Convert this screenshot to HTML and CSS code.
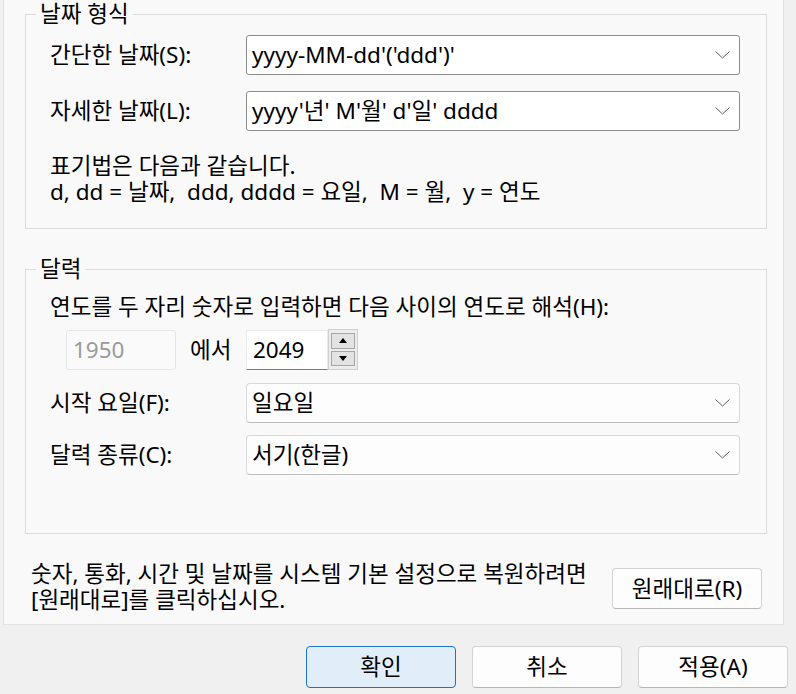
FILE: index.html
```html
<!DOCTYPE html>
<html lang="ko">
<head>
<meta charset="utf-8">
<title>날짜 형식</title>
<link rel="stylesheet" href="styles.css">
</head>
<body>
<div class="panel">
  <fieldset class="group g1">
    <legend>날짜 형식</legend>
    <div class="inner">
      <div class="row">
        <span class="label">간단한 날짜(S):</span>
        <div class="combo edit"><span class="val">yyyy-MM-dd'('ddd')'</span><svg class="chev" width="15" height="8" viewBox="0 0 15 8"><polyline points="0.5,0.5 7.5,7 14.5,0.5" fill="none" stroke="#5f5f5f" stroke-width="1"/></svg></div>
      </div>
      <div class="row">
        <span class="label">자세한 날짜(L):</span>
        <div class="combo edit"><span class="val">yyyy'년' M'월' d'일' dddd</span><svg class="chev" width="15" height="8" viewBox="0 0 15 8"><polyline points="0.5,0.5 7.5,7 14.5,0.5" fill="none" stroke="#5f5f5f" stroke-width="1"/></svg></div>
      </div>
      <p class="note">표기법은 다음과 같습니다.<br>d, dd = 날짜,&nbsp; ddd, dddd = 요일,&nbsp; M = 월,&nbsp; y = 연도</p>
    </div>
  </fieldset>

  <fieldset class="group g2">
    <legend>달력</legend>
    <div class="inner">
      <p class="line">연도를 두 자리 숫자로 입력하면 다음 사이의 연도로 해석(H):</p>
      <div class="row yearrow">
        <div class="range">
          <div class="yearbox">1950</div>
          <span class="from">에서</span>
        </div>
        <div class="spin">
          <div class="spin-text">2049</div>
          <div class="spin-btns">
            <div class="sb"><span class="tri up"></span></div>
            <div class="sb"><span class="tri down"></span></div>
          </div>
        </div>
      </div>
      <div class="row r3">
        <span class="label">시작 요일(F):</span>
        <div class="combo list"><span class="val">일요일</span><svg class="chev" width="15" height="8" viewBox="0 0 15 8"><polyline points="0.5,0.5 7.5,7 14.5,0.5" fill="none" stroke="#5f5f5f" stroke-width="1"/></svg></div>
      </div>
      <div class="row r4">
        <span class="label">달력 종류(C):</span>
        <div class="combo list"><span class="val">서기(한글)</span><svg class="chev" width="15" height="8" viewBox="0 0 15 8"><polyline points="0.5,0.5 7.5,7 14.5,0.5" fill="none" stroke="#5f5f5f" stroke-width="1"/></svg></div>
      </div>
    </div>
  </fieldset>

  <div class="restore">
    <p>숫자, 통화, 시간 및 날짜를 시스템 기본 설정으로 복원하려면<br>[원래대로]를 클릭하십시오.</p>
    <button class="btn reset">원래대로(R)</button>
  </div>
</div>

<div class="footer">
  <button class="btn primary">확인</button>
  <button class="btn">취소</button>
  <button class="btn">적용(A)</button>
</div>
</body>
</html>
```

FILE: styles.css
```css
* { box-sizing: border-box; }

html, body {
  margin: 0;
  padding: 0;
}

body {
  width: 796px;
  height: 694px;
  overflow: hidden;
  background: #f0f0f0;
  color: #000;
  font-family: "Noto Sans", "Noto Sans CJK KR", sans-serif;
  font-size: 22.5px;
  line-height: 26px;
}

.panel {
  margin-left: 3px;
  width: 781px;
  border: 1px solid #e2e2e2;
  border-top: none;
  background: #f9f9f9;
  padding: 0 16px 11px 21px;
}

.group {
  margin: 0;
  padding: 0;
  min-width: 0;
  border: 1px solid #dcdcdc;
}

.group legend {
  margin-left: 10px;
  padding: 0 4px;
  line-height: 28px;
}

.g1 .inner {
  padding: 7px 26px 23px 24px;
}

.g2 {
  margin-top: 26px;
}

.g2 .inner {
  padding: 11px 26px 58px 24px;
}

.row {
  display: grid;
  grid-template-columns: 196px 1fr;
  align-items: center;
}

.g1 .row + .row {
  margin-top: 16px;
}

.label {
  white-space: nowrap;
}

.combo {
  height: 40px;
  display: flex;
  align-items: center;
  justify-content: space-between;
  padding: 0 9px 0 5px;
  border-radius: 3px;
  white-space: nowrap;
}

.combo.edit {
  background: #fff;
  border: 1px solid #8c8c8c;
}

.combo.list {
  background: #fdfdfd;
  border: 1px solid #d8d8d8;
  border-bottom-color: #bdbdbd;
  border-radius: 4px;
}

.chev {
  flex: none;
  display: block;
}

.note {
  margin: 22px 0 0;
  white-space: nowrap;
}

.line {
  margin: 0;
  white-space: nowrap;
}

.yearrow {
  margin-top: 9px;
  height: 40px;
}

.range {
  display: flex;
  align-items: center;
  height: 40px;
}

.yearbox {
  margin-left: 16px;
  width: 110px;
  height: 40px;
  line-height: 38px;
  padding-left: 6px;
  border: 1px solid #e6e6e6;
  border-radius: 3px;
  color: #9a9a9a;
  background: #fafafa;
}

.from {
  margin-left: 14px;
}

.spin {
  display: flex;
  height: 41px;
}

.spin-text {
  width: 82px;
  height: 40px;
  margin-top: 1px;
  line-height: 38px;
  padding-left: 6px;
  background: #fff;
  border: 1px solid #ececec;
  border-bottom-color: #7a7a7a;
}

.spin-btns {
  width: 30px;
  height: 41px;
  display: flex;
  flex-direction: column;
  gap: 2px;
  padding: 3px 2px;
  background: #ededed;
  border: 1px solid #cfcfcf;
}

.sb {
  flex: 1;
  display: flex;
  align-items: center;
  justify-content: center;
  background: #e3e3e3;
  border: 1px solid #a6a6a6;
}

.tri {
  width: 0;
  height: 0;
  border-left: 4px solid transparent;
  border-right: 4px solid transparent;
}

.tri.up {
  border-bottom: 5px solid #000;
}

.tri.down {
  border-top: 5px solid #000;
}

.r3 {
  margin-top: 14px;
}

.r4 {
  margin-top: 12px;
}

.restore {
  margin-top: 27px;
  display: flex;
  justify-content: space-between;
  align-items: flex-start;
  padding-left: 6px;
  padding-right: 5px;
}

.restore p {
  margin: 0;
  white-space: nowrap;
}

.btn {
  font: inherit;
  color: #000;
  width: 150px;
  height: 42px;
  padding: 0;
  background: #fdfdfd;
  border: 1px solid #d3d3d3;
  border-bottom-color: #b7b7b7;
  border-radius: 4px;
}

.btn.reset {
  margin-top: 7px;
  height: 41px;
  flex: none;
}

.btn.primary {
  background: #e1eef9;
  border: 1px solid #1a73c8;
}

.footer {
  margin-top: 21px;
  display: flex;
  justify-content: flex-end;
  gap: 16px;
  padding-right: 8px;
}
```
